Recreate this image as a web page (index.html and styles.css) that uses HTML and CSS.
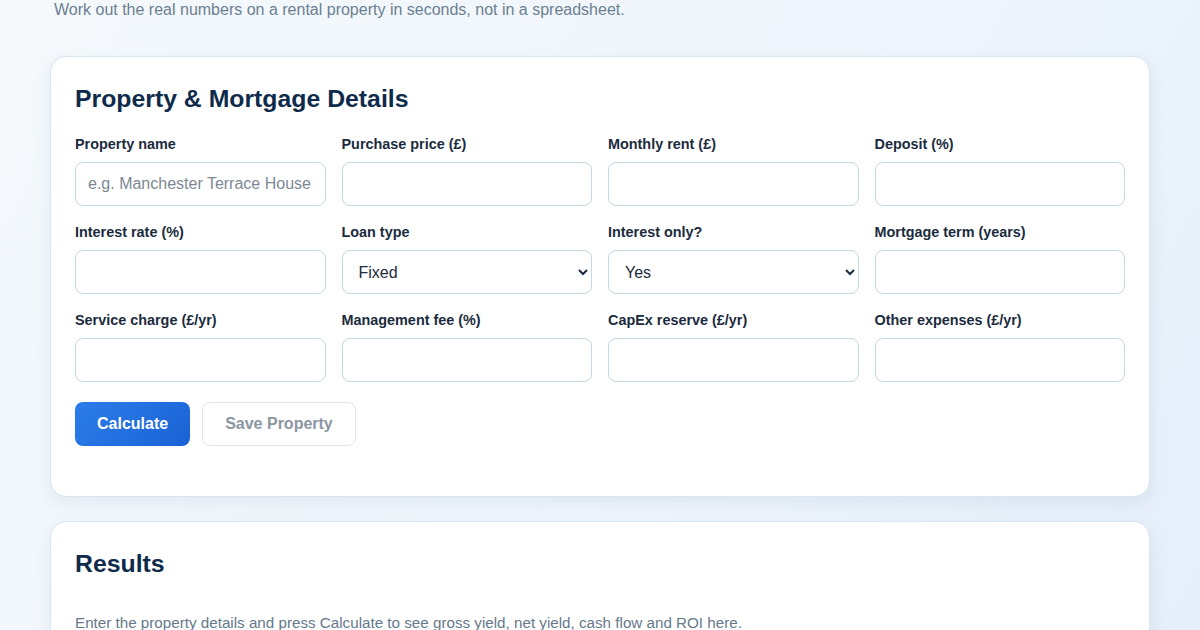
FILE: index.html
```html
<!DOCTYPE html>
<html lang="en">
<head>
    <meta charset="UTF-8">
    <meta name="viewport" content="width=device-width, initial-scale=1.0">
    <title>Rental Yield Calculator</title>
    <link rel="stylesheet" href="styles.css">
</head>
<body>
    <div class="container">
        <p class="subtitle">Work out the real numbers on a rental property in seconds, not in a spreadsheet.</p>

        <div class="card">
            <h2>Property &amp; Mortgage Details</h2>
            <div class="form-grid">
                <div class="field">
                    <label>Property name</label>
                    <input type="text" placeholder="e.g. Manchester Terrace House">
                </div>
                <div class="field">
                    <label>Purchase price (£)</label>
                    <input type="number">
                </div>
                <div class="field">
                    <label>Monthly rent (£)</label>
                    <input type="number">
                </div>
                <div class="field">
                    <label>Deposit (%)</label>
                    <input type="number">
                </div>
                <div class="field">
                    <label>Interest rate (%)</label>
                    <input type="number">
                </div>
                <div class="field">
                    <label>Loan type</label>
                    <select>
                        <option>Fixed</option>
                        <option>Variable</option>
                    </select>
                </div>
                <div class="field">
                    <label>Interest only?</label>
                    <select>
                        <option>Yes</option>
                        <option>No</option>
                    </select>
                </div>
                <div class="field">
                    <label>Mortgage term (years)</label>
                    <input type="number">
                </div>
                <div class="field">
                    <label>Service charge (£/yr)</label>
                    <input type="number">
                </div>
                <div class="field">
                    <label>Management fee (%)</label>
                    <input type="number">
                </div>
                <div class="field">
                    <label>CapEx reserve (£/yr)</label>
                    <input type="number">
                </div>
                <div class="field">
                    <label>Other expenses (£/yr)</label>
                    <input type="number">
                </div>
            </div>
            <div class="actions">
                <button class="btn-primary">Calculate</button>
                <button class="btn-secondary" disabled>Save Property</button>
            </div>
        </div>

        <div class="card">
            <h2>Results</h2>
            <p class="empty">Enter the property details and press Calculate to see gross yield, net yield, cash flow and ROI here.</p>
        </div>
    </div>
</body>
</html>
```

FILE: styles.css
```css
body {
    font-family: "Liberation Sans", Arial, sans-serif;
    background: linear-gradient(120deg, #f5f9fc 0%, #eef5fc 60%, #e4eef9 100%);
    margin: 0;
    padding: 0;
    min-height: 100vh;
    color: #1b2b3d;
}
.container {
    max-width: 1100px;
    margin: 0 auto;
}
.subtitle {
    margin: 0 0 36px 4px;
    font-size: 16px;
    line-height: 20px;
    color: #6b7f91;
}
.card {
    background-color: #fff;
    border: 1px solid #d9e5ef;
    border-radius: 16px;
    padding: 24px 24px 50px;
    margin-bottom: 24px;
    box-shadow: 0 6px 18px rgba(30, 70, 110, 0.08);
}
.card h2 {
    margin: 0 0 17px;
    font-size: 24.8px;
    line-height: 36px;
    color: #0f2b4b;
}
.form-grid {
    display: grid;
    grid-template-columns: repeat(4, 1fr);
    gap: 16px;
}
.field label {
    display: block;
    font-size: 14.4px;
    line-height: 20px;
    font-weight: bold;
    color: #1b2b3d;
    margin-bottom: 8px;
}
.field input,
.field select {
    width: 100%;
    box-sizing: border-box;
    height: 44px;
    padding: 0 12px;
    border: 1px solid #c5d8e6;
    border-radius: 8px;
    background-color: #fff;
    font-family: inherit;
    font-size: 16px;
    color: #1b2b3d;
}
.field input::placeholder {
    color: #7d8893;
}
.actions {
    display: flex;
    gap: 12px;
    margin-top: 20px;
}
.btn-primary {
    height: 44px;
    padding: 0 22px;
    background: linear-gradient(135deg, #2b7de9, #1a62d5);
    color: #fff;
    border: none;
    border-radius: 8px;
    font-family: inherit;
    font-size: 16px;
    font-weight: bold;
    cursor: pointer;
}
.btn-secondary {
    height: 44px;
    padding: 0 22px;
    background-color: #fff;
    color: #8b96a2;
    border: 1px solid #dce6ee;
    border-radius: 8px;
    font-family: inherit;
    font-size: 16px;
    font-weight: bold;
}
.empty {
    margin: 30px 0 0;
    font-size: 15.2px;
    line-height: 22px;
    color: #66798b;
}
```
